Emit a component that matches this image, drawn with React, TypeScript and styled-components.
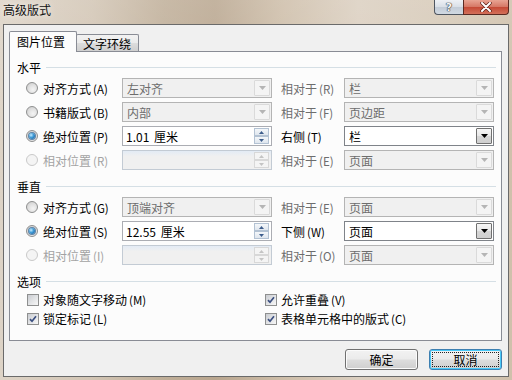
import React from 'react'
import styled, { createGlobalStyle } from 'styled-components'

// ─── Global ───────────────────────────────────────────────────────────────────

const GlobalStyle = createGlobalStyle`
    html, body {
        margin: 0;
        padding: 0;
    }
    body {
        width: 512px;
        height: 380px;
        overflow: hidden;
        font-family: 'Noto Sans CJK SC', 'Liberation Sans', sans-serif;
        font-size: 12px;
        color: #000;
    }
    * {
        box-sizing: border-box;
    }
`

// ─── Window frame ─────────────────────────────────────────────────────────────

const Window = styled.div`
    display: flex;
    flex-direction: column;
    width: 512px;
    height: 380px;
    background:
        linear-gradient(180deg, rgba(255, 255, 255, 0.15) 0%, rgba(255, 255, 255, 0) 40%),
        linear-gradient(90deg, #ddd3c6 0%, #d2c5b4 18%, #bfae98 32%, #b9a68f 42%, #cdbda8 55%, #dbcfc0 70%, #d6c9b7 86%, #cfc0ab 100%);
`

const TitleBar = styled.div`
    display: flex;
    align-items: flex-start;
    justify-content: space-between;
    height: 24px;
    flex-shrink: 0;
`

const Title = styled.div`
    padding-left: 3px;
    line-height: 20px;
    font-size: 12px;
    color: #111;
    text-shadow: 0 0 6px rgba(255, 255, 255, 0.9);
`

const CaptionButtons = styled.div`
    display: flex;
    margin-right: 3px;
`

const HelpButton = styled.div`
    width: 29px;
    height: 15px;
    border: 1px solid #4f5660;
    border-top: none;
    border-right: none;
    border-radius: 0 0 0 4px;
    background: linear-gradient(180deg, #eef1f5 0%, #d9dfe7 50%, #c3ccd7 51%, #d1d9e2 100%);
    display: flex;
    align-items: center;
    justify-content: center;
    font-family: 'DejaVu Sans', sans-serif;
    font-size: 11px;
    font-weight: bold;
    line-height: 1;
    color: #f7f7f7;
    text-shadow: 0 0 1px #333, 0 0 1px #333, 0 0 1px #333;
`

const CloseButton = styled.div`
    width: 46px;
    height: 15px;
    border: 1px solid #5b2a22;
    border-top: none;
    border-radius: 0 0 4px 0;
    background: linear-gradient(180deg, #e8a493 0%, #d67866 48%, #c54a36 52%, #d3705a 100%);
    display: flex;
    align-items: center;
    justify-content: center;
`

const Client = styled.div`
    flex: 1;
    margin: 0 3px 3px;
    border: 1px solid #6a6a6a;
    background: #f0f0f0;
    padding: 6px 6px 0 5px;
    display: flex;
    flex-direction: column;
`

// ─── Tabs ─────────────────────────────────────────────────────────────────────

const TabStrip = styled.div`
    display: flex;
    align-items: flex-end;
    height: 20px;
    position: relative;
    z-index: 1;
`

const Tab = styled.div<{ $active?: boolean }>`
    border: 1px solid #898c95;
    border-bottom: none;
    border-radius: 2px 2px 0 0;
    line-height: 1;
    display: flex;
    align-items: center;
    color: #000;
    font-size: 12px;
    width: ${p => (p.$active ? '68px' : '63px')};
    height: ${p => (p.$active ? '21px' : '17px')};
    margin-bottom: ${p => (p.$active ? '-1px' : '0')};
    margin-left: ${p => (p.$active ? '0' : '-1px')};
    padding: ${p => (p.$active ? '0 0 0 7px' : '2px 0 0 6px')};
    background: ${p => (p.$active ? '#fcfcfc' : 'linear-gradient(180deg, #f2f2f2 0%, #ebebeb 50%, #dddddd 51%, #cfcfcf 100%)')};
`

const Panel = styled.div`
    height: 290px;
    border: 1px solid #898c95;
    background: #fcfcfc;
    padding: 6px 5px 0 7px;
`

// ─── Sections ─────────────────────────────────────────────────────────────────

const Section = styled.div`
    & + & {
        margin-top: 5px;
    }
`

const Header = styled.div`
    display: flex;
    align-items: center;
    gap: 5px;
    height: 18px;
    color: #000;

    &::after {
        content: '';
        flex: 1;
        height: 1px;
        background: #d5dfe5;
    }
`

const Row = styled.div`
    display: flex;
    align-items: center;
    height: 24px;
    padding-left: 9px;
`

const RadioLabel = styled.div<{ $disabled?: boolean }>`
    width: 96px;
    display: flex;
    align-items: center;
    gap: 5px;
    white-space: nowrap;
    color: ${p => (p.$disabled ? '#a3a3a3' : '#000')};
`

const RightLabel = styled.div<{ $disabled?: boolean }>`
    width: 63px;
    margin-left: 9px;
    white-space: nowrap;
    color: ${p => (p.$disabled ? '#6d6d6d' : '#000')};
`

const Key = styled.span`
    font-size: 11.5px;
    margin-left: 2px;
`

// ─── Radio & checkbox ─────────────────────────────────────────────────────────

const RadioCircle = styled.span<{ $checked?: boolean; $disabled?: boolean }>`
    width: 12px;
    height: 12px;
    flex-shrink: 0;
    border-radius: 50%;
    border: 1px solid ${p => (p.$disabled ? '#c9c9c9' : '#8e8f8f')};
    background: ${p =>
        p.$disabled
            ? '#f4f4f4'
            : 'radial-gradient(circle at 60% 65%, #f4f4f4 0%, #e2e2e2 45%, #c9c9c9 100%)'};
    display: flex;
    align-items: center;
    justify-content: center;

    &::after {
        content: '';
        display: ${p => (p.$checked ? 'block' : 'none')};
        width: 6px;
        height: 6px;
        border-radius: 50%;
        background: radial-gradient(circle at 35% 35%, #c7ecff 0%, #3e9ad6 45%, #0d4f8f 100%);
        box-shadow: 0 0 0 1px #5d84a8;
    }
`

const CheckGrid = styled.div`
    display: grid;
    grid-template-columns: 238px 1fr;
    grid-auto-rows: 19px;
    padding-left: 10px;
`

const CheckItem = styled.div`
    display: flex;
    align-items: center;
    gap: 4px;
    white-space: nowrap;
`

const CheckBox = styled.span`
    width: 12px;
    height: 12px;
    flex-shrink: 0;
    border: 1px solid #8e8f8f;
    background: linear-gradient(135deg, #c9ccd1 0%, #e4e5e7 55%, #f7f7f7 100%);
    display: flex;
    align-items: center;
    justify-content: center;
`

// ─── Fields ───────────────────────────────────────────────────────────────────

const Combo = styled.div<{ $disabled?: boolean }>`
    width: 150px;
    height: 20px;
    display: flex;
    align-items: center;
    padding: 1px;
    border: 1px solid ${p => (p.$disabled ? '#b4b4b4' : '#7f8389')};
    background: ${p => (p.$disabled ? '#f0f0f0' : '#fff')};
    color: ${p => (p.$disabled ? '#6d6d6d' : '#000')};
`

const FieldValue = styled.span`
    flex: 1;
    padding-left: 3px;
    white-space: nowrap;
    overflow: hidden;
    word-spacing: 2px;
`

const DropButton = styled.span<{ $disabled?: boolean }>`
    width: 16px;
    height: 16px;
    display: flex;
    align-items: center;
    justify-content: center;
    border: 1px solid ${p => (p.$disabled ? '#dadada' : '#707070')};
    border-radius: 1px;
    background: ${p =>
        p.$disabled
            ? '#f4f4f4'
            : 'linear-gradient(180deg, #f6f6f6 0%, #e7e7e7 50%, #d6d6d6 51%, #cfcfcf 100%)'};
`

const SpinField = styled.div<{ $disabled?: boolean }>`
    width: 150px;
    height: 20px;
    display: flex;
    align-items: center;
    padding: 1px 1px 1px 0;
    border: 1px solid ${p => (p.$disabled ? '#c3cbd4' : '#abadb3')};
    background: ${p => (p.$disabled ? 'linear-gradient(180deg, #e3ebf5 0%, #f0f0f0 30%)' : '#fff')};
`

const Spinner = styled.span`
    width: 15px;
    height: 16px;
    display: flex;
    flex-direction: column;
    margin-right: 1px;
`

const SpinHalf = styled.span<{ $disabled?: boolean }>`
    flex: 1;
    display: flex;
    align-items: center;
    justify-content: center;
    border: 1px solid ${p => (p.$disabled ? '#d8d8d8' : '#b3c2d3')};
    background: ${p =>
        p.$disabled ? '#f4f4f4' : 'linear-gradient(180deg, #f4f7fa 0%, #dfe6ee 100%)'};
`

// ─── Buttons ──────────────────────────────────────────────────────────────────

const ButtonRow = styled.div`
    display: flex;
    justify-content: flex-end;
    gap: 11px;
    margin-top: 8px;
`

const PushButton = styled.div<{ $default?: boolean }>`
    width: 73px;
    height: 21px;
    border: 1px solid ${p => (p.$default ? '#3c7fb1' : '#707070')};
    border-radius: 3px;
    background: linear-gradient(180deg, #f2f2f2 0%, #ebebeb 48%, #dddddd 52%, #cfcfcf 100%);
    box-shadow: inset 0 0 0 1px ${p => (p.$default ? '#48c9f8' : '#fbfbfb')};
    padding: 2px;
    display: flex;

    & > span {
        flex: 1;
        display: flex;
        align-items: center;
        justify-content: center;
        border: 1px ${p => (p.$default ? 'dotted #222' : 'solid transparent')};
        color: #000;
    }
`

// ─── Icons ────────────────────────────────────────────────────────────────────

const DownTriangle = ({ color }: { color: string }) => (
    <svg width="7" height="4" viewBox="0 0 7 4">
        <path d="M0 0 H7 L3.5 4 Z" fill={color} />
    </svg>
)

const SpinArrow = ({ up, color }: { up?: boolean; color: string }) => (
    <svg width="5" height="3" viewBox="0 0 5 3">
        <path d={up ? 'M0 3 H5 L2.5 0 Z' : 'M0 0 H5 L2.5 3 Z'} fill={color} />
    </svg>
)

const CloseGlyph = () => (
    <svg width="12" height="10" viewBox="0 0 12 10">
        <path d="M2 1 L10 9 M10 1 L2 9" stroke="#5a2018" strokeWidth="3.4" strokeLinecap="round" />
        <path d="M2 1 L10 9 M10 1 L2 9" stroke="#ffffff" strokeWidth="2" strokeLinecap="round" />
    </svg>
)

const CheckMark = () => (
    <svg width="8" height="8" viewBox="0 0 8 8">
        <path d="M1 4.2 L3 6.3 L7 1.3" fill="none" stroke="#3b4f80" strokeWidth="1.7" />
    </svg>
)

// ─── Pieces ───────────────────────────────────────────────────────────────────

type Label = { text: string; key: string }

function Radio({ label, checked, disabled }: { label: Label; checked?: boolean; disabled?: boolean }) {
    return (
        <RadioLabel $disabled={disabled}>
            <RadioCircle $checked={checked} $disabled={disabled} />
            <span>
                {label.text}
                <Key>({label.key})</Key>
            </span>
        </RadioLabel>
    )
}

function ComboBox({ value, disabled }: { value: string; disabled?: boolean }) {
    return (
        <Combo $disabled={disabled}>
            <FieldValue>{value}</FieldValue>
            <DropButton $disabled={disabled}>
                <DownTriangle color={disabled ? '#b5b5b5' : '#000'} />
            </DropButton>
        </Combo>
    )
}

function Spin({ value, disabled }: { value: string; disabled?: boolean }) {
    const c = disabled ? '#c4c4c4' : '#3d5d8c'
    return (
        <SpinField $disabled={disabled}>
            <FieldValue>{value}</FieldValue>
            <Spinner>
                <SpinHalf $disabled={disabled}>
                    <SpinArrow up color={c} />
                </SpinHalf>
                <SpinHalf $disabled={disabled}>
                    <SpinArrow color={c} />
                </SpinHalf>
            </Spinner>
        </SpinField>
    )
}

function Relative({ label, disabled }: { label: Label; disabled?: boolean }) {
    return (
        <RightLabel $disabled={disabled}>
            {label.text}
            <Key>({label.key})</Key>
        </RightLabel>
    )
}

function Check({ text, k, checked }: { text: string; k: string; checked?: boolean }) {
    return (
        <CheckItem>
            <CheckBox>{checked && <CheckMark />}</CheckBox>
            <span>
                {text}
                <Key>({k})</Key>
            </span>
        </CheckItem>
    )
}

// ─── App ──────────────────────────────────────────────────────────────────────

export default function App() {
    return (
        <>
            <GlobalStyle />
            <Window>
                <TitleBar>
                    <Title>高级版式</Title>
                    <CaptionButtons>
                        <HelpButton>?</HelpButton>
                        <CloseButton>
                            <CloseGlyph />
                        </CloseButton>
                    </CaptionButtons>
                </TitleBar>
                <Client>
                    <TabStrip>
                        <Tab $active>图片位置</Tab>
                        <Tab>文字环绕</Tab>
                    </TabStrip>
                    <Panel>
                        <Section>
                            <Header>水平</Header>
                            <Row>
                                <Radio label={{ text: '对齐方式', key: 'A' }} />
                                <ComboBox value="左对齐" disabled />
                                <Relative label={{ text: '相对于', key: 'R' }} disabled />
                                <ComboBox value="栏" disabled />
                            </Row>
                            <Row>
                                <Radio label={{ text: '书籍版式', key: 'B' }} />
                                <ComboBox value="内部" disabled />
                                <Relative label={{ text: '相对于', key: 'F' }} disabled />
                                <ComboBox value="页边距" disabled />
                            </Row>
                            <Row>
                                <Radio label={{ text: '绝对位置', key: 'P' }} checked />
                                <Spin value="1.01 厘米" />
                                <Relative label={{ text: '右侧', key: 'T' }} />
                                <ComboBox value="栏" />
                            </Row>
                            <Row>
                                <Radio label={{ text: '相对位置', key: 'R' }} disabled />
                                <Spin value="" disabled />
                                <Relative label={{ text: '相对于', key: 'E' }} disabled />
                                <ComboBox value="页面" disabled />
                            </Row>
                        </Section>
                        <Section>
                            <Header>垂直</Header>
                            <Row>
                                <Radio label={{ text: '对齐方式', key: 'G' }} />
                                <ComboBox value="顶端对齐" disabled />
                                <Relative label={{ text: '相对于', key: 'E' }} disabled />
                                <ComboBox value="页面" disabled />
                            </Row>
                            <Row>
                                <Radio label={{ text: '绝对位置', key: 'S' }} checked />
                                <Spin value="12.55 厘米" />
                                <Relative label={{ text: '下侧', key: 'W' }} />
                                <ComboBox value="页面" />
                            </Row>
                            <Row>
                                <Radio label={{ text: '相对位置', key: 'I' }} disabled />
                                <Spin value="" disabled />
                                <Relative label={{ text: '相对于', key: 'O' }} disabled />
                                <ComboBox value="页面" disabled />
                            </Row>
                        </Section>
                        <Section>
                            <Header>选项</Header>
                            <CheckGrid>
                                <Check text="对象随文字移动" k="M" />
                                <Check text="允许重叠" k="V" checked />
                                <Check text="锁定标记" k="L" checked />
                                <Check text="表格单元格中的版式" k="C" checked />
                            </CheckGrid>
                        </Section>
                    </Panel>
                    <ButtonRow>
                        <PushButton>
                            <span>确定</span>
                        </PushButton>
                        <PushButton $default>
                            <span>取消</span>
                        </PushButton>
                    </ButtonRow>
                </Client>
            </Window>
        </>
    )
}
